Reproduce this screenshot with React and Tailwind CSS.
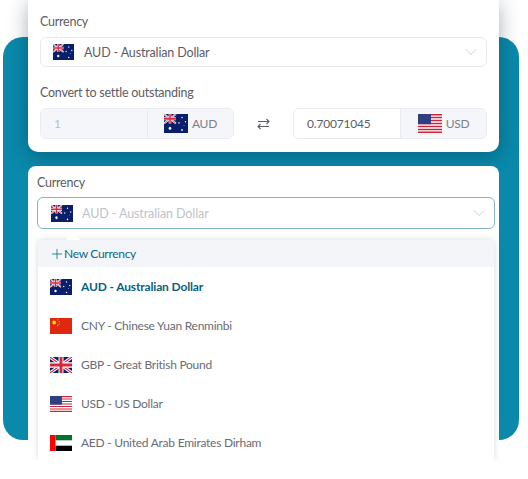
import { ChevronDown, Plus } from 'lucide-react'

const FlagAU = ({ className }) => (
  <svg className={className} viewBox="0 0 24 16" preserveAspectRatio="none">
    <rect width="24" height="16" fill="#0a1f6b" />
    <path d="M0 0L12 8M12 0L0 8" stroke="#fff" strokeWidth="1.6" />
    <path d="M0 0L12 8M12 0L0 8" stroke="#d8263c" strokeWidth=".6" />
    <path d="M6 0V8M0 4H12" stroke="#fff" strokeWidth="2.6" />
    <path d="M6 0V8M0 4H12" stroke="#d8263c" strokeWidth="1.5" />
    <circle cx="6" cy="12" r="1.3" fill="#fff" />
    <circle cx="18" cy="3" r=".7" fill="#fff" />
    <circle cx="21.5" cy="6.5" r=".7" fill="#fff" />
    <circle cx="15" cy="7.5" r=".7" fill="#fff" />
    <circle cx="18" cy="13.5" r=".8" fill="#fff" />
    <circle cx="20" cy="9.5" r=".4" fill="#fff" />
  </svg>
)

const FlagCN = ({ className }) => (
  <svg className={className} viewBox="0 0 24 16" preserveAspectRatio="none">
    <rect width="24" height="16" fill="#de2910" />
    <circle cx="4.5" cy="4.5" r="2" fill="#ffde00" />
    <circle cx="8.5" cy="1.8" r=".6" fill="#ffde00" />
    <circle cx="10" cy="3.6" r=".6" fill="#ffde00" />
    <circle cx="10" cy="6" r=".6" fill="#ffde00" />
    <circle cx="8.5" cy="7.6" r=".6" fill="#ffde00" />
  </svg>
)

const FlagGB = ({ className }) => (
  <svg className={className} viewBox="0 0 24 16" preserveAspectRatio="none">
    <rect width="24" height="16" fill="#0a1f6b" />
    <path d="M0 0L24 16M24 0L0 16" stroke="#fff" strokeWidth="3.2" />
    <path d="M0 0L24 16M24 0L0 16" stroke="#d8263c" strokeWidth="1.1" />
    <path d="M12 0V16M0 8H24" stroke="#fff" strokeWidth="5.4" />
    <path d="M12 0V16M0 8H24" stroke="#d8263c" strokeWidth="3.2" />
  </svg>
)

const FlagUS = ({ className }) => (
  <svg className={className} viewBox="0 0 24 16" preserveAspectRatio="none">
    <rect width="24" height="16" fill="#fff" />
    <path d="M0 .6H24M0 3H24M0 5.5H24M0 8H24M0 10.5H24M0 13H24M0 15.4H24" stroke="#c5283d" strokeWidth="1.2" />
    <rect width="13" height="8.6" fill="#2f3f7f" />
  </svg>
)

const FlagAE = ({ className }) => (
  <svg className={className} viewBox="0 0 24 16" preserveAspectRatio="none">
    <rect width="24" height="16" fill="#fff" />
    <rect x="6" width="18" height="5.3" fill="#00732f" />
    <rect x="6" y="10.7" width="18" height="5.3" fill="#000" />
    <rect width="6" height="16" fill="#ff0000" />
  </svg>
)

const SwapIcon = () => (
  <svg className="w-[13px] h-[14px] text-[#5b5d66]" viewBox="0 0 13 14" fill="none" stroke="currentColor" strokeWidth="1.1">
    <path d="M1 4.5H12M9.5 2L12 4.5L9.5 7" />
    <path d="M12 9.5H1M3.5 7L1 9.5L3.5 12" />
  </svg>
)

const CURRENCIES = [
  { label: 'AUD - Australian Dollar', Flag: FlagAU, active: true },
  { label: 'CNY - Chinese Yuan Renminbi', Flag: FlagCN },
  { label: 'GBP - Great British Pound', Flag: FlagGB },
  { label: 'USD - US Dollar', Flag: FlagUS },
  { label: 'AED - United Arab Emirates Dirham', Flag: FlagAE },
]

const AmountGroup = ({ value, code, Flag, disabled }) => (
  <div className="flex h-[31px] w-[194px] rounded-md border border-[#e9ebf1] overflow-hidden">
    <div className={`w-[107px] flex items-center border-r border-[#e9ebf1] pl-[13px] text-[12px] tracking-[-0.2px] ${disabled ? 'bg-[#f5f6fa] text-[#b9bcc6]' : 'bg-white text-[#5b5d66]'}`}>
      {value}
    </div>
    <div className="flex-1 flex items-center justify-center gap-[4px] bg-[#f5f6fa] text-[#7d7f88] text-[12px]">
      <Flag className="w-[24px] h-[19px]" />
      <span>{code}</span>
    </div>
  </div>
)

export default function App() {
  return (
    <div className="relative w-[528px] h-[479px] bg-white overflow-hidden text-[12.5px] tracking-[-0.25px] font-['Lato','Open_Sans',sans-serif]">

      {/* teal panel behind the cards */}
      <div className="absolute left-[3px] top-[37px] w-[516px] h-[403px] rounded-[20px] bg-[#0a89ab]" />

      <div className="relative mx-[28px] w-[471px]">

        {/* Converter card */}
        <div className="h-[152px] bg-white rounded-b-[10px] shadow-[0_4px_20px_rgba(0,30,50,0.35)] px-[12px] pt-[14px]">
          <div className="text-[#5b5d66] leading-[16px]">Currency</div>
          <div className="mt-[7px] h-[30px] rounded-md border border-[#e9ebf1] flex items-center pl-[12px] pr-[5px]">
            <FlagAU className="w-[21px] h-[16px]" />
            <span className="ml-[10px] pt-[2px] text-[#5b5d66] tracking-[-0.15px]">AUD - Australian Dollar</span>
            <ChevronDown className="ml-auto w-[20px] h-[20px] text-[#c4c6ce]" strokeWidth={1} />
          </div>
          <div className="mt-[18px] text-[#5b5d66] leading-[16px]">Convert to settle outstanding</div>
          <div className="mt-[7px] flex items-center justify-between">
            <AmountGroup value="1" code="AUD" Flag={FlagAU} disabled />
            <SwapIcon />
            <AmountGroup value="0.70071045" code="USD" Flag={FlagUS} />
          </div>
        </div>

        {/* Select card */}
        <div className="relative mt-[14px] h-[294px] bg-white rounded-t-[8px] overflow-hidden px-[9px] pt-[9px]">
          <div className="text-[#5b5d66] leading-[16px]">Currency</div>
          <div className="mt-[6px] h-[32px] w-[458px] rounded-md border border-[#86b6cb] flex items-center pl-[13px] pr-[5px]">
            <FlagAU className="w-[22px] h-[17px]" />
            <span className="ml-[9px] pt-[3px] text-[#c0c2cb] tracking-[-0.1px]">AUD - Australian Dollar</span>
            <ChevronDown className="ml-auto w-[20px] h-[20px] text-[#c4c6ce]" strokeWidth={1} />
          </div>

          {/* Dropdown menu */}
          <div className="relative mt-[11px] ml-px w-[456px] h-[220px] bg-white rounded-t-[4px] shadow-[0_0_6px_rgba(40,50,90,0.18)]">
            <div className="absolute left-[30px] top-[-5px] w-[10px] h-[10px] rotate-45 bg-white" />
            <div className="relative h-[27px] bg-[#f4f5f9] flex items-center pl-[11px] text-[#0b6a8a] text-[12px] tracking-[-0.3px] rounded-t-[4px]">
              <Plus className="w-[16px] h-[16px]" strokeWidth={1.2} />
              <span className="-ml-px">New Currency</span>
            </div>
            <div className="h-[193px] overflow-hidden">
              {CURRENCIES.map(({ label, Flag, active }) => (
                <div key={label} className="h-[39px] flex items-center pl-[12px] text-[12px]">
                  <Flag className="w-[22px] h-[16px]" />
                  <span className={`ml-[9px] ${active ? 'font-bold text-[#0b5f80] tracking-[-0.15px]' : 'text-[#6a6c75] tracking-[-0.25px]'}`}>{label}</span>
                </div>
              ))}
            </div>
          </div>
        </div>
      </div>
    </div>
  )
}
